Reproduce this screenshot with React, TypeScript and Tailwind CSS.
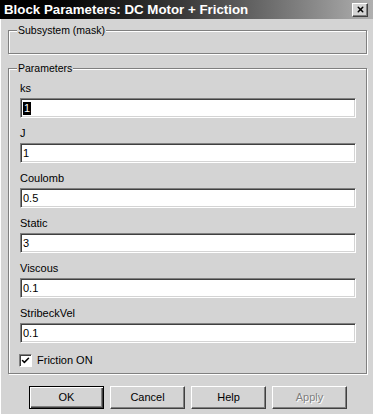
import { Check, X } from "lucide-react";

const FONT = "font-['Liberation_Sans',Arial,sans-serif]";

const params = [
  { label: "ks", value: "1", selected: true },
  { label: "J", value: "1" },
  { label: "Coulomb", value: "0.5" },
  { label: "Static", value: "3" },
  { label: "Viscous", value: "0.1" },
  { label: "StribeckVel", value: "0.1" },
];

function GroupBox({ title, className, children }: { title: string; className?: string; children?: React.ReactNode }) {
  return (
    <div
      className={`relative border border-[#808080] shadow-[inset_1px_1px_0_#fff,1px_1px_0_#fff] ${className ?? ""}`}
    >
      <span className="absolute left-[8px] top-[-8px] bg-[#d4d4d4] px-[1px] text-[10.5px] leading-[14px] text-black">
        {title}
      </span>
      {children}
    </div>
  );
}

function Field({ label, value, selected }: { label: string; value: string; selected?: boolean }) {
  return (
    <div className="flex flex-col">
      <div className="h-[25px] pl-[11px] pt-[9px] text-[11px] leading-[13px] text-black">{label}</div>
      <div className="ml-[11px] flex h-[20px] w-[336px] items-center border border-b-white border-l-[#808080] border-r-white border-t-[#808080] bg-white pl-[2px] shadow-[inset_1px_1px_0_#404040,inset_-1px_-1px_0_#d4d4d4]">
        <span
          className={`text-[11px] leading-[13px] ${selected ? "bg-black px-[1px] text-white" : "text-black"}`}
        >
          {value}
        </span>
      </div>
    </div>
  );
}

function Button({ label, isDefault, disabled }: { label: string; isDefault?: boolean; disabled?: boolean }) {
  return (
    <div
      className={`flex h-[23px] w-[75px] items-center justify-center bg-[#d4d4d4] text-[11px] ${
        isDefault
          ? "border border-black shadow-[inset_1px_1px_0_#fff,inset_-1px_-1px_0_#404040,inset_-2px_-2px_0_#808080]"
          : "border border-b-[#404040] border-l-white border-r-[#404040] border-t-white shadow-[inset_-1px_-1px_0_#808080]"
      } ${disabled ? "text-[#808080] [text-shadow:1px_1px_0_#fff]" : "text-black"}`}
    >
      {label}
    </div>
  );
}

export default function App() {
  return (
    <div className={`relative h-[414px] w-[373px] overflow-hidden bg-[#d4d4d4] ${FONT}`}>
      <div className="flex h-[19px] items-center justify-between bg-gradient-to-r from-black via-[#3c3c3c] to-[#b0b0b0] pl-[4px] pr-[5px]">
        <span className="text-[13.3px] font-bold leading-none text-white">Block Parameters: DC Motor + Friction</span>
        <div className="flex h-[14px] w-[16px] items-center justify-center border border-b-[#404040] border-l-white border-r-[#404040] border-t-white bg-[#d4d4d4] shadow-[inset_-1px_-1px_0_#808080]">
          <X className="h-[9px] w-[9px] text-black" strokeWidth={4} />
        </div>
      </div>

      <div className="flex h-[395px] border-l border-l-white pl-[7px] pr-[6px]">
        <div className="flex w-[359px] flex-col">
          <GroupBox title="Subsystem (mask)" className="mt-[11px] h-[24px]" />
          <GroupBox title="Parameters" className="mt-[14px] h-[306px]">
            <div className="flex flex-col pt-[4px]">
              {params.map((p) => (
                <Field key={p.label} label={p.label} value={p.value} selected={p.selected} />
              ))}
              <div className="ml-[10px] mt-[9px] flex items-center gap-[5px]">
                <div className="flex h-[13px] w-[13px] items-center justify-center border border-b-white border-l-[#808080] border-r-white border-t-[#808080] bg-white shadow-[inset_1px_1px_0_#404040]">
                  <Check className="h-[9px] w-[9px] text-black" strokeWidth={4} />
                </div>
                <span className="text-[11px] text-black">Friction ON</span>
              </div>
            </div>
          </GroupBox>
          <div className="mt-[12px] flex gap-[6px] pl-[21px]">
            <Button label="OK" isDefault />
            <Button label="Cancel" />
            <Button label="Help" />
            <Button label="Apply" disabled />
          </div>
        </div>
      </div>
    </div>
  );
}
